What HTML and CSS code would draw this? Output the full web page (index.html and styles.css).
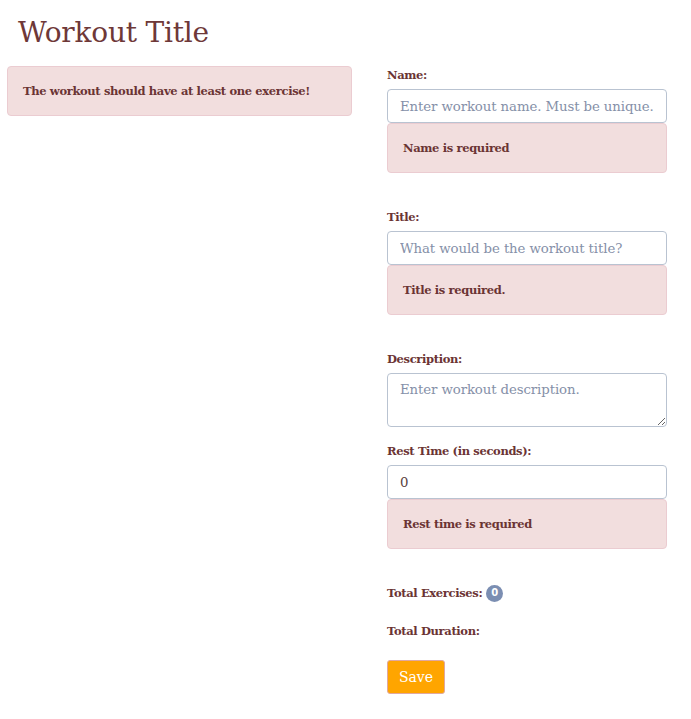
FILE: index.html
```html
<!DOCTYPE html>
<html>
<head>
<meta charset="utf-8">
<link rel="stylesheet" href="styles.css">
</head>
<body>
<div class="page">
  <h1 class="title">Workout Title</h1>
  <div class="row">
    <div class="left">
      <div class="alert alert-wide">The workout should have at least one exercise!</div>
    </div>
    <div class="right">
      <div class="group">
        <label class="label">Name:</label>
        <input class="input" type="text" placeholder="Enter workout name. Must be unique.">
        <div class="alert">Name is required</div>
      </div>
      <div class="group">
        <label class="label">Title:</label>
        <input class="input" type="text" placeholder="What would be the workout title?">
        <div class="alert">Title is required.</div>
      </div>
      <div class="group group-tight">
        <label class="label">Description:</label>
        <textarea class="input textarea" placeholder="Enter workout description."></textarea>
      </div>
      <div class="group">
        <label class="label">Rest Time (in seconds):</label>
        <input class="input" type="text" value="0">
        <div class="alert">Rest time is required</div>
      </div>
      <div class="stat">Total Exercises: <span class="badge">0</span></div>
      <div class="stat">Total Duration:</div>
      <button class="btn" type="button">Save</button>
    </div>
  </div>
</div>
</body>
</html>
```
FILE: styles.css
```css
* { box-sizing: border-box; }
body {
  margin: 0;
  font-family: "DejaVu Serif", serif;
  color: #6b3434;
  background: #fff;
}
.page { padding: 0 0 0 7px; }
.title {
  margin: 0;
  padding: 14px 0 0 11px;
  height: 56px;
  font-size: 28px;
  font-weight: normal;
  line-height: 38px;
  color: #6e3838;
  letter-spacing: -0.2px;
}
.row {
  display: flex;
  align-items: flex-start;
  padding-top: 10px;
}
.left { width: 345px; }
.right { width: 280px; margin-left: 35px; margin-top: -1px; }
.alert {
  background: #f2dede;
  border: 1px solid #ebccd1;
  border-radius: 4px;
  padding: 0 15px;
  height: 50px;
  display: flex;
  align-items: center;
  font-size: 11.5px;
  font-weight: bold;
  letter-spacing: -0.35px;
  color: #6b3434;
}
.group .alert { margin-bottom: 34px; }
.group-tight { margin-bottom: 14px; }
.label {
  display: block;
  height: 20px;
  line-height: 20px;
  margin-bottom: 4px;
  font-size: 11.5px;
  font-weight: bold;
  letter-spacing: -0.35px;
}
.input {
  display: block;
  width: 280px;
  height: 34px;
  padding: 0 12px;
  border: 1px solid #b9c3d1;
  border-radius: 4px;
  font-family: "DejaVu Serif", serif;
  font-size: 13.3px;
  letter-spacing: -0.1px;
  color: #5a4040;
  background: #fff;
  outline: none;
  margin: 0;
}
.input::placeholder { color: #8590a8; }
.textarea {
  height: 54px;
  padding-top: 8px;
  resize: vertical;
}
.stat {
  height: 20px;
  line-height: 20px;
  font-size: 11.5px;
  font-weight: bold;
  letter-spacing: -0.35px;
  display: flex;
  align-items: center;
  margin-bottom: 18px;
}
.badge {
  display: inline-flex;
  align-items: center;
  justify-content: center;
  width: 17px;
  height: 17px;
  margin-left: 4px;
  border-radius: 50%;
  background: #7b8eb2;
  color: #fff;
  font-size: 10px;
  font-family: "DejaVu Sans", sans-serif;
  font-weight: bold;
  letter-spacing: 0;
}
.btn {
  margin-top: 1px;
  width: 58px;
  height: 34px;
  background: #ffa500;
  border: 1px solid #e0a8a0;
  border-radius: 3px;
  color: #fff;
  font-family: "DejaVu Serif", serif;
  font-size: 14px;
  padding: 0;
}
```
